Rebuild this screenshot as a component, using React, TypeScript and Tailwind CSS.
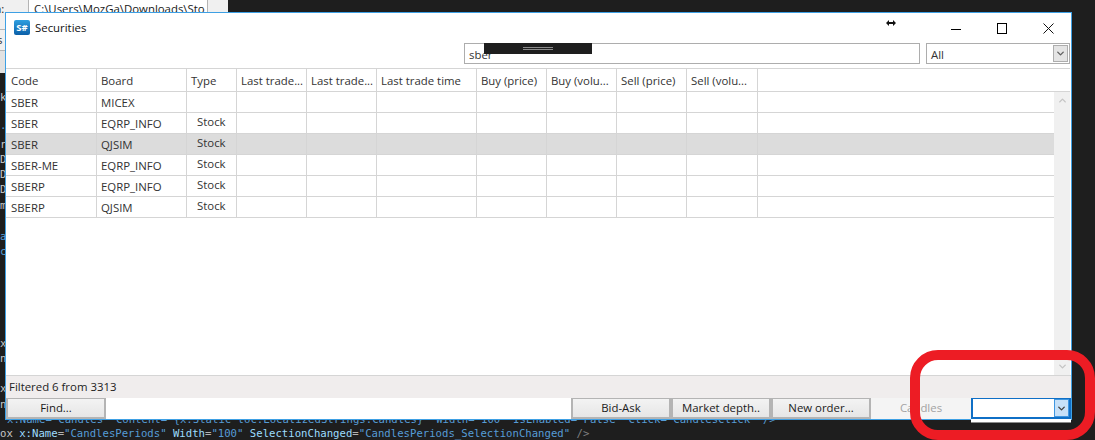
import { ChevronDown, ChevronUp } from 'lucide-react'

const font = { fontFamily: '"Open Sans", "Noto Sans", sans-serif' }

const headers = ['Code', 'Board', 'Type', 'Last trade...', 'Last trade...', 'Last trade time', 'Buy (price)', 'Buy (volu...', 'Sell (price)', 'Sell (volu...']

const columns = ['w-[91px]', 'w-[90px]', 'w-[50px]', 'w-[70px]', 'w-[70px]', 'w-[100px]', 'w-[70px]', 'w-[70px]', 'w-[70px]', 'w-[71px]']

const rows = [
  { code: 'SBER', board: 'MICEX', type: '' },
  { code: 'SBER', board: 'EQRP_INFO', type: 'Stock' },
  { code: 'SBER', board: 'QJSIM', type: 'Stock', selected: true },
  { code: 'SBER-ME', board: 'EQRP_INFO', type: 'Stock' },
  { code: 'SBERP', board: 'EQRP_INFO', type: 'Stock' },
  { code: 'SBERP', board: 'QJSIM', type: 'Stock' },
]

const edgeText = [
  { top: 'top-[90px]', color: 'text-[#c8c8c8]', ch: 'k' },
  { top: 'top-[118px]', color: 'text-[#569cd6]', ch: '..' },
  { top: 'top-[137px]', color: 'text-[#c8c8c8]', ch: 'r' },
  { top: 'top-[152px]', color: 'text-[#c8c8c8]', ch: 'D' },
  { top: 'top-[167px]', color: 'text-[#c8c8c8]', ch: 'D' },
  { top: 'top-[182px]', color: 'text-[#c8c8c8]', ch: 'D' },
  { top: 'top-[198px]', color: 'text-[#c8c8c8]', ch: 'm' },
  { top: 'top-[229px]', color: 'text-[#569cd6]', ch: 'a' },
  { top: 'top-[244px]', color: 'text-[#569cd6]', ch: 'c' },
  { top: 'top-[336px]', color: 'text-[#c8c8c8]', ch: 'x' },
  { top: 'top-[351px]', color: 'text-[#c8c8c8]', ch: 'n' },
  { top: 'top-[381px]', color: 'text-[#c8c8c8]', ch: 'x' },
  { top: 'top-[397px]', color: 'text-[#c8c8c8]', ch: 'n' },
]

function Button({ label, disabled, width }: { label: string; disabled?: boolean; width: string }) {
  return (
    <div
      className={`${width} h-full flex items-center justify-center border-2 text-[11.4px] ${
        disabled
          ? 'border-[#f4f4f4] bg-[#f4f4f4] text-[#a3a3a3]'
          : 'border-[#b4b4b4] bg-gradient-to-b from-[#f3f3f3] to-[#e6e6e6] text-[#1a1a1a]'
      }`}
    >
      {label}
    </div>
  )
}

function Desktop() {
  return (
    <>
      {/* stuff behind the window */}
      <div className="absolute left-0 top-0 w-[228px] h-[29px] bg-[#f0f0f0] overflow-hidden flex text-[11.4px] text-[#1a1a1a]" style={font}>
        <div className="w-[28px] shrink-0 leading-[17px] -indent-[5px]">a:</div>
        <div className="w-[180px] shrink-0 bg-white border-x border-[#b4b4b4] pl-[5px] leading-[17px] whitespace-nowrap overflow-hidden">
          C:\Users\MozGa\Downloads\Sto
        </div>
      </div>
      <div className="absolute left-0 top-[29px] w-[5px] h-[22px] bg-[#f0f0f0] border-y border-[#b4b4b4] overflow-hidden text-[11.4px] leading-[20px] -indent-[3px] text-[#333]" style={font}>
        s
      </div>
      <div className="absolute left-0 top-[51px] w-[5px] h-[22px] bg-[#e2e2e2]" />
      {edgeText.map((e, i) => (
        <div key={i} className={`absolute left-0 ${e.top} w-[5px] h-[15px] overflow-hidden font-['DejaVu_Sans_Mono',monospace] text-[10.65px] ${e.color}`}>
          {e.ch}
        </div>
      ))}
      <div className="absolute left-[7px] top-[412px] whitespace-nowrap font-['DejaVu_Sans_Mono',monospace] text-[10.65px] text-[#569cd6]">
        x:Name="Candles" Content="{'{'}x:Static loc:LocalizedStrings.Candles{'}'}" Width="100" IsEnabled="False" Click="CandlesClick" /&gt;
      </div>
      <div className="absolute left-0 top-[426px] whitespace-nowrap font-['DejaVu_Sans_Mono',monospace] text-[10.65px] text-[#569cd6]">
        <span className="text-[#c8c8c8]">ox </span>
        <span className="text-[#9cdcfe]">x:Name</span>
        <span className="text-[#b4b4b4]">=</span>"CandlesPeriods" <span className="text-[#9cdcfe]">Width</span>
        <span className="text-[#b4b4b4]">=</span>"100" <span className="text-[#9cdcfe]">SelectionChanged</span>
        <span className="text-[#b4b4b4]">=</span>"CandlesPeriods_SelectionChanged" <span className="text-[#808080]">/&gt;</span>
      </div>
    </>
  )
}

export default function App() {
  return (
    <div className="relative w-[1095px] h-[440px] bg-[#1e1e1e] overflow-hidden" style={font}>
      <Desktop />

      {/* Securities window */}
      <div className="absolute left-[5px] top-[12px] w-[1067px] h-[408px] bg-white border border-[#3ea0e4] flex flex-col">
        {/* title bar */}
        <div className="h-[30px] shrink-0 flex items-center pl-[8px] text-[11.4px] text-[#111]">
          <div className="w-[16px] h-[15px] mt-[-1px] rounded-[2px] bg-gradient-to-b from-[#2f9fe0] to-[#0b5fa8] text-white text-[9.5px] font-bold leading-[15px] text-center">
            S#
          </div>
          <span className="ml-[5px] mt-[-1px]">Securities</span>
          <svg className="ml-[800px] mt-[-10px]" width="10" height="8" viewBox="0 0 10 8">
            <path d="M0 4 L3 1 V3 H7 V1 L10 4 L7 7 V5 H3 V7 Z" fill="#111" />
          </svg>
          <div className="ml-auto flex items-center">
            <div className="w-[46px] flex justify-center">
              <div className="w-[10px] h-[1px] bg-black mt-[2px]" />
            </div>
            <div className="w-[46px] flex justify-center">
              <div className="w-[10px] h-[11px] border border-black mt-[1px]" />
            </div>
            <div className="w-[46px] flex justify-center">
              <svg width="11" height="11" viewBox="0 0 11 11" className="mt-[1px]">
                <path d="M0.5 0.5 L10.5 10.5 M10.5 0.5 L0.5 10.5" stroke="#111" strokeWidth="1" />
              </svg>
            </div>
          </div>
        </div>

        {/* filter */}
        <div className="h-[21px] shrink-0 flex justify-end pr-[1px] text-[11.4px] text-[#333]">
          <div className="relative w-[456px] h-full border border-[#adadad] bg-white pl-[4px] leading-[21px]">
            sber
            <div className="absolute left-[19px] top-[-1px] w-[108px] h-[11px] bg-[#1e1e1e] flex flex-col items-center pt-[4px] gap-[1px]">
              <div className="w-[30px] h-[1px] bg-[#8a8a8a]" />
              <div className="w-[30px] h-[1px] bg-[#8a8a8a]" />
            </div>
          </div>
          <div className="ml-[6px] w-[144px] h-full border border-[#adadad] bg-white pl-[4px] leading-[21px] flex justify-between">
            All
            <div className="w-[15px] h-[17px] m-[1px] border border-[#adadad] bg-[#e4e4e4] flex items-center justify-center">
              <ChevronDown size={11} strokeWidth={3} className="text-[#606060]" />
            </div>
          </div>
        </div>

        {/* table */}
        <div className="mt-[4px] flex-1 min-h-0 relative text-[11.4px] text-[#333]">
          <div className="h-[24px] flex border-y border-[#d5d5d5] mr-[1px]">
            {headers.map((h, i) => (
              <div key={i} className={`${columns[i]} shrink-0 border-r border-[#d5d5d5] ${i === 0 ? 'pl-[5px]' : 'pl-[4px]'} leading-[24px] whitespace-nowrap overflow-hidden`}>
                {h}
              </div>
            ))}
          </div>
          <div className="flex h-[283px]">
            <div className="flex-1">
              {rows.map((r, i) => (
                <div key={i} className={`h-[21px] flex border-b border-[#d5d5d5] ${r.selected ? 'bg-[#dcdcdc]' : ''}`}>
                  {columns.map((c, j) => (
                    <div
                      key={j}
                      className={`${c} shrink-0 border-r border-[#d5d5d5] whitespace-nowrap ${j === 2 ? 'pl-[10px] leading-[18px]' : j === 0 ? 'pl-[5px] leading-[22px]' : 'pl-[4px] leading-[22px]'}`}
                    >
                      {j === 0 ? r.code : j === 1 ? r.board : j === 2 ? r.type : ''}
                    </div>
                  ))}
                </div>
              ))}
            </div>
            <div className="w-[16px] mr-[1px] bg-[#f0f0f0] flex flex-col justify-between items-center py-[3px]">
              <ChevronUp size={11} strokeWidth={3} className="text-[#c4c4c4]" />
              <ChevronDown size={11} strokeWidth={3} className="text-[#c4c4c4]" />
            </div>
          </div>

          {/* status */}
          <div className="h-[23px] bg-[#f0eded] border-t border-[#d5d5d5] pl-[3px] leading-[22px] text-[#222]">Filtered 6 from 3313</div>
        </div>

        {/* buttons */}
        <div className="h-[22px] shrink-0 flex">
          <Button label="Find..." width="w-[100px]" />
          <div className="flex-1" />
          <Button label="Bid-Ask" width="w-[100px]" />
          <Button label="Market depth.." width="w-[100px]" />
          <Button label="New order..." width="w-[100px]" />
          <Button label="Candles" disabled width="w-[100px]" />
          <div className="w-[100px] h-[22px] border-2 border-[#0f6fc6] bg-white flex justify-end">
            <div className="w-[15px] h-[18px] border border-[#3f96e0] bg-[#c6e0f8] flex items-center justify-center">
              <ChevronDown size={11} strokeWidth={3} className="text-[#404040]" />
            </div>
          </div>
        </div>
      </div>

      {/* dropdown peeking out below the combobox */}
      <div className="absolute left-[971px] top-[419px] w-[100px] h-[4px] bg-white border-b border-[#8a8a8a]" />

      {/* red annotation */}
      <div className="absolute left-[910px] top-[350px] w-[185px] h-[90px] border-[10px] border-[#ed1c24] rounded-[28px]" />
    </div>
  )
}
